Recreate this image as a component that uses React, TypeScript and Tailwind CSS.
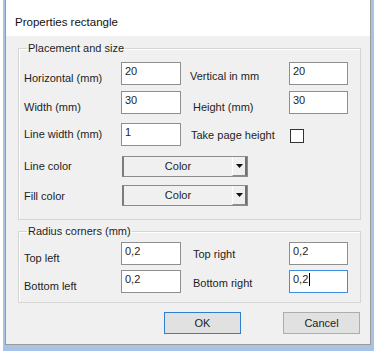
import type { ReactNode } from "react";

function TextBox({ value, width, focused = false }: { value: string; width: string; focused?: boolean }) {
  return (
    <div
      className={`${width} h-[23px] shrink-0 bg-white border ${
        focused ? "border-[#3d8ee0]" : "border-[#8f8f8f]"
      } pl-[3px] pt-[2px] flex items-start`}
    >
      <span>{value}</span>
      {focused && <span className="ml-[1px] w-px h-[13px] bg-black" />}
    </div>
  );
}

function Combo() {
  return (
    <div className="w-[126px] h-[21px] shrink-0 flex bg-[#f0f0f0] border border-[#8c8c8c] border-l-2 border-l-[#7c7c7c]">
      <div className="flex-1 flex items-center justify-center">Color</div>
      <div className="w-[15px] flex items-center justify-center border-l border-l-white border-r-2 border-r-[#6f6f6f] border-b border-b-[#8c8c8c]">
        <svg width="7" height="4" viewBox="0 0 7 4">
          <path d="M0 0h7L3.5 4z" fill="#111" />
        </svg>
      </div>
    </div>
  );
}

function Label({ children, className }: { children: ReactNode; className: string }) {
  return <div className={`shrink-0 ${className}`}>{children}</div>;
}

function Group({ title, className, children }: { title: string; className: string; children: ReactNode }) {
  return (
    <fieldset
      className={`ml-[12px] w-[343px] border border-[#d5d5d5] shadow-[inset_1px_1px_0_#ffffff] pl-[5px] ${className}`}
    >
      <legend className="ml-[3px] px-[1px] leading-[13px]">{title}</legend>
      {children}
    </fieldset>
  );
}

export default function App() {
  return (
    <div className="w-[379px] h-[351px] bg-white pl-[3px] font-['Liberation_Sans',Arial,sans-serif] text-[11px] leading-[13px] text-[#1e1e1e]">
      <div className="w-[371px] h-[351px] border-l-2 border-r-[3px] border-b-[6px] border-[#a8c3e6]">
        <div className="h-full flex flex-col border-l border-r border-b border-[#9a9a9a]">
          <div className="h-[36px] bg-white pl-[9px] pt-[16px] text-[11.5px] text-[#111]">
            Properties rectangle
          </div>
          <div className="flex-1 bg-[#f0f0f0] pt-[6px]">
            <Group title="Placement and size" className="pb-[13px]">
              <div className="flex h-[23px] mt-[7px]">
                <Label className="w-[97px] pt-[10px]">Horizontal (mm)</Label>
                <TextBox value="20" width="w-[60px]" />
                <Label className="ml-[9px] w-[99px] pt-[8px]">Vertical in mm</Label>
                <TextBox value="20" width="w-[59px]" />
              </div>
              <div className="flex h-[23px] mt-[6px]">
                <Label className="w-[97px] pt-[10px]">Width (mm)</Label>
                <TextBox value="30" width="w-[60px]" />
                <Label className="ml-[9px] w-[99px] pt-[10px] pl-[3px]">Height (mm)</Label>
                <TextBox value="30" width="w-[59px]" />
              </div>
              <div className="flex h-[23px] mt-[9px]">
                <Label className="w-[97px] pt-[5px]">Line width (mm)</Label>
                <TextBox value="1" width="w-[60px]" />
                <Label className="ml-[10px] w-[99px] pt-[6px]">Take page height</Label>
                <div className="mt-[6px] w-[14px] h-[14px] bg-white border border-[#333]" />
              </div>
              <div className="flex h-[21px] mt-[10px]">
                <Label className="w-[98px] pt-[4px]">Line color</Label>
                <Combo />
              </div>
              <div className="flex h-[21px] mt-[8px]">
                <Label className="w-[98px] pt-[5px]">Fill color</Label>
                <Combo />
              </div>
            </Group>
            <Group title="Radius corners (mm)" className="mt-[5px] pb-[9px]">
              <div className="flex h-[23px] mt-[4px]">
                <Label className="w-[97px] pt-[10px]">Top left</Label>
                <TextBox value="0,2" width="w-[60px]" />
                <Label className="ml-[12px] w-[96px] pt-[6px]">Top right</Label>
                <TextBox value="0,2" width="w-[59px]" />
              </div>
              <div className="flex h-[23px] mt-[5px]">
                <Label className="w-[97px] pt-[10px]">Bottom left</Label>
                <TextBox value="0,2" width="w-[60px]" />
                <Label className="ml-[12px] w-[96px] pt-[7px]">Bottom right</Label>
                <TextBox value="0,2" width="w-[59px]" focused />
              </div>
            </Group>
            <div className="flex mt-[9px] ml-[158px] gap-[42px]">
              <button className="w-[77px] h-[22px] bg-[#e1e1e1] border border-[#2f7fd0] leading-[13px]">OK</button>
              <button className="w-[77px] h-[22px] bg-[#e1e1e1] border border-[#adadad] leading-[13px]">Cancel</button>
            </div>
          </div>
        </div>
      </div>
    </div>
  );
}
